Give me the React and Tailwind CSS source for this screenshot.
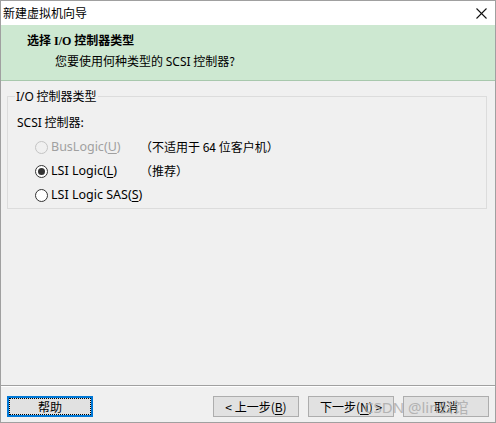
import React from "react";

const ui = { fontFamily: '"Noto Sans", "Noto Sans CJK SC", sans-serif' };
const cjk = { fontFamily: '"Noto Sans CJK SC", "Noto Sans", sans-serif' };

const Radio = ({ checked, disabled }) => (
  <span
    className={`w-[13px] h-[13px] shrink-0 rounded-full border flex items-center justify-center ${
      disabled ? "border-[#c4c4c4] bg-[#f0f0f0]" : "border-[#333] bg-white"
    }`}
  >
    {checked && <span className="w-[7px] h-[7px] rounded-full bg-[#333]" />}
  </span>
);

const Option = ({ label, hotkey, note, checked, disabled }) => (
  <div className="h-[24px] flex items-center ml-[18px] whitespace-nowrap">
    <div className="w-[105px] shrink-0 flex items-center gap-[3px]">
      <Radio checked={checked} disabled={disabled} />
      <span className={`text-[12.5px] ${disabled ? "text-[#a0a0a0]" : "text-black"}`} style={ui}>
        {label}(<span className="underline underline-offset-2">{hotkey}</span>)
      </span>
    </div>
    {note && <span style={cjk}>{note}</span>}
  </div>
);

const Button = ({ children, focused }) => (
  <button
    className={`w-[86px] h-[21px] bg-[#e1e1e1] text-[12px] leading-none flex items-center justify-center ${
      focused ? "border-2 border-[#0078d7] outline outline-1 outline-dotted outline-black -outline-offset-[3px]" : "border border-[#adadad]"
    }`}
    style={cjk}
  >
    {children}
  </button>
);

export default function App() {
  return (
    <div
      className="w-[496px] h-[423px] flex flex-col bg-[#f0f0f0] border border-[#a0a0a0] text-[12px] text-black relative overflow-hidden"
      style={cjk}
    >
      {/* title bar */}
      <div className="h-[24px] bg-white flex items-center justify-between pl-[2px] pr-[8px]">
        <span className="leading-none">新建虚拟机向导</span>
        <svg width="11" height="11" viewBox="0 0 11 11" stroke="#111" strokeWidth="1.1">
          <line x1="0.5" y1="0.5" x2="10.5" y2="10.5" />
          <line x1="10.5" y1="0.5" x2="0.5" y2="10.5" />
        </svg>
      </div>

      {/* header */}
      <div className="h-[56px] bg-[#cde8d1] border-b border-[#a8c8ad] flex flex-col pt-[8px]">
        <div
          className="pl-[26px] h-[16px] leading-[16px] font-bold"
          style={{ fontFamily: '"Liberation Serif", "Noto Sans CJK SC", serif' }}
        >
          选择 I/O 控制器类型
        </div>
        <div className="pl-[54px] mt-[4px] h-[16px] leading-[16px]">
          您要使用何种类型的 <span style={ui}>SCSI</span> 控制器?
        </div>
      </div>

      {/* body */}
      <div className="flex-1 pt-[15px] pl-[6px] border-b border-[#a0a0a0]">
        <div className="w-[480px] h-[113px] border border-[#dcdcdc] relative pt-[17px] pl-[9px]">
          <span className="absolute -top-[9px] left-[7px] px-[1px] bg-[#f0f0f0] leading-[16px]">
            <span style={ui}>I/O</span> 控制器类型
          </span>
          <div className="h-[16px] leading-[16px]">
            <span style={ui}>SCSI</span> 控制器:
          </div>
          <div className="mt-[5px]">
            <Option label="BusLogic" hotkey="U" note="（不适用于 64 位客户机）" disabled />
            <Option label="LSI Logic" hotkey="L" note="（推荐）" checked />
            <Option label="LSI Logic SAS" hotkey="S" />
          </div>
        </div>
      </div>

      {/* footer */}
      <div className="h-[36px] border-t border-white flex items-start pt-[9px] pl-[6px] pr-[6px]">
        <Button focused>帮助</Button>
        <div className="flex-1" />
        <div className="flex gap-[9px]">
          <Button>&lt; 上一步(<span className="underline underline-offset-2">B</span>)</Button>
          <Button>下一步(<span className="underline underline-offset-2">N</span>) &gt;</Button>
          <Button>取消</Button>
        </div>
      </div>

      <span
        className="absolute left-[363px] top-[398px] text-[15px] leading-none text-[#a8a8a8] opacity-80 pointer-events-none"
        style={ui}
      >
        CSDN @lin<span style={cjk}>公馆</span>
      </span>
    </div>
  );
}
